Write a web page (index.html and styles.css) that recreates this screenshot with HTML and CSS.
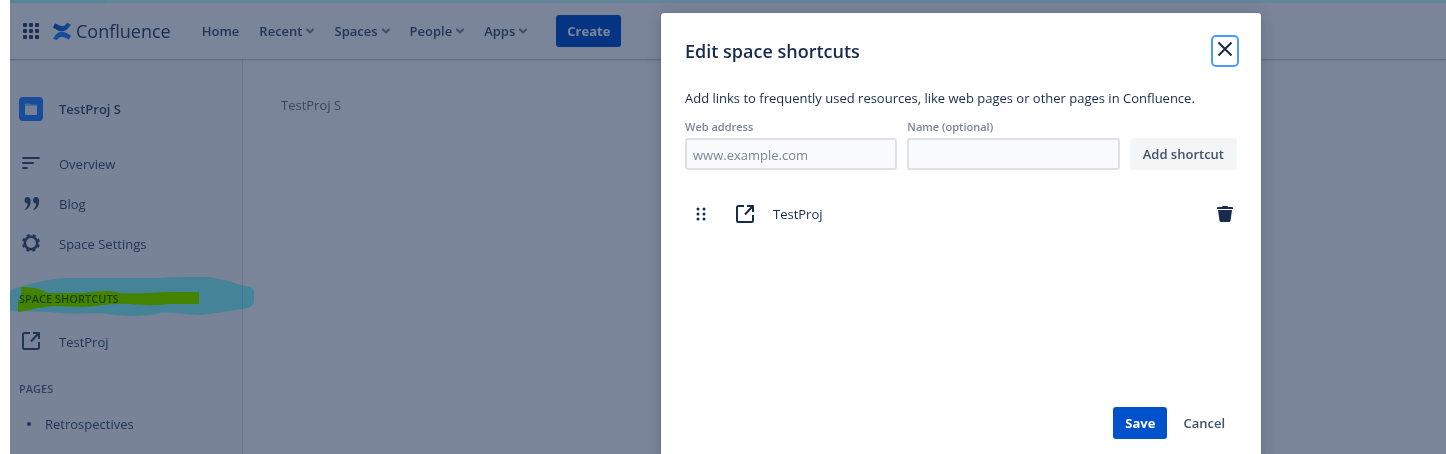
FILE: index.html
```html
<!DOCTYPE html>
<html lang="en">
<head>
<meta charset="utf-8">
<title>TestProj S - Confluence</title>
<link rel="stylesheet" href="styles.css">
</head>
<body>
<svg class="defs" aria-hidden="true">
  <symbol id="shortcut" viewBox="0 0 18 18"><path d="M8 1H2.500Q1 1 1 2.500V15.500Q1 17 2.500 17H15.500Q17 17 17 15.500V10" fill="none" stroke="currentColor" stroke-width="2"/><path d="M9 9.500L16 2" fill="none" stroke="currentColor" stroke-width="2"/><path d="M11 0H17Q18 0 18 1V7H16V3.500L14.500 2H11Z" fill="currentColor"/></symbol>
  <symbol id="chevron" viewBox="0 0 8 6"><path d="M1 1.500L4 4.500L7 1.500" fill="none" stroke="currentColor" stroke-width="2" stroke-linecap="round" stroke-linejoin="round"/></symbol>
</svg>
<div class="app">
  <header class="topbar">
    <button class="plain switcher" aria-label="Switch to"><svg width="16" height="16" viewBox="0 0 16 16" fill="currentColor"><rect width="4" height="4" rx="1"/><rect x="6" width="4" height="4" rx="1"/><rect x="12" width="4" height="4" rx="1"/><rect y="6" width="4" height="4" rx="1"/><rect x="6" y="6" width="4" height="4" rx="1"/><rect x="12" y="6" width="4" height="4" rx="1"/><rect y="12" width="4" height="4" rx="1"/><rect x="6" y="12" width="4" height="4" rx="1"/><rect x="12" y="12" width="4" height="4" rx="1"/></svg></button>
    <a class="brand" href="#">
      <svg width="18" height="17" viewBox="0 0 18 17"><defs><linearGradient id="g" x1="0" x2="1"><stop stop-color="#0052cc"/><stop offset="1" stop-color="#2684ff"/></linearGradient></defs><path d="M3 .7Q2.200.2 1.700 1L.2 4Q0 4.600.6 4.900C4 6.900 6.300 8.300 9.300 8.300C13 8.300 15.200 5.700 17.600 2Q17.900 1.400 17.300 1L14.500.1Q13.900 0 13.500.5C11.800 2.700 10.500 3.400 8.700 3.100C7 2.800 5 1.900 3 .7Z" fill="url(#g)"/><path d="M15 16.300Q15.800 16.800 16.300 16L17.800 13Q18 12.400 17.400 12.100C14 10.100 11.700 8.700 8.700 8.700C5 8.700 2.800 11.300.4 15Q.1 15.600.7 16L3.500 16.900Q4.100 17 4.500 16.500C6.200 14.300 7.500 13.600 9.300 13.900C11 14.200 13 15.100 15 16.300Z" fill="#2684ff"/></svg>
      <span>Confluence</span>
    </a>
    <nav class="menu">
      <a href="#">Home</a>
      <button class="plain">Recent<svg class="chev"><use href="#chevron"/></svg></button>
      <button class="plain">Spaces<svg class="chev"><use href="#chevron"/></svg></button>
      <button class="plain">People<svg class="chev"><use href="#chevron"/></svg></button>
      <button class="plain">Apps<svg class="chev"><use href="#chevron"/></svg></button>
    </nav>
    <button class="btn primary">Create</button>
  </header>
  <div class="body">
    <aside class="sidebar">
      <a class="item space" href="#"><svg width="24" height="24" viewBox="0 0 24 24"><rect width="24" height="24" rx="4" fill="#2684ff"/><path d="M6 7.500Q6 6.500 7 6.500H10.500L11.500 7.500H17Q18 7.500 18 8.500V10H6Z" fill="#9cc3ff"/><path d="M6 9H18V17Q18 18 17 18H7Q6 18 6 17Z" fill="#f4f5f7"/></svg><span>TestProj S</span></a>
      <a class="item" href="#"><svg width="24" height="24" viewBox="0 0 24 24" stroke="currentColor" stroke-width="2" stroke-linecap="round"><path d="M4 6H20M4 11H14M4 16H8"/></svg><span>Overview</span></a>
      <a class="item" href="#"><svg width="24" height="24" viewBox="0 0 24 24" fill="currentColor"><path id="q" d="M8.500 5C10.700 5 11.700 6.700 11.700 9.200C11.700 13.500 9.500 16.500 6.500 18Q5.700 18 5.900 17.200C7.700 15.600 8.500 14 8.500 11.500C6.500 11.500 5.500 10 5.500 8.200C5.500 6.200 6.800 5 8.500 5Z"/><use href="#q" x="8.500"/></svg><span>Blog</span></a>
      <a class="item" href="#"><svg width="24" height="24" viewBox="0 0 24 24" fill="none" stroke="currentColor"><circle cx="12" cy="11" r="6.200" stroke-width="2.600"/><circle cx="12" cy="11" r="7.900" stroke-width="2.200" stroke-dasharray="3.100 3.105" stroke-dashoffset="4.600"/></svg><span>Space Settings</span></a>
      <h2 class="heading marked">Space shortcuts
        <svg class="marker" width="244" height="39" viewBox="0 0 244 39" aria-hidden="true"><path fill="#90ffff" d="M0 14C8 9 20 7 30 5C43 1 55 1 70 1H150C160 0 170 0 200 0C215 2 225 7 235 9Q244 9 244 15V25Q243 31 232 32C215 34 205 37 190 38C175 38 165 35 150 36C135 40 115 39 105 38C90 34 70 38 50 36C35 34 20 35 0 34Z"/><path fill="#90ff00" d="M11 10C23 10 31 12 38 16H75C85 14 100 13 110 16C125 17 140 16 155 15H189V27H160C145 29 130 28 120 27C100 26 85 30 70 30C55 30 45 28 35 30C24 31 18 34 8 35V23H11Z"/></svg>
      </h2>
      <a class="item" href="#"><svg width="24" height="24" viewBox="-3 -2 24 24"><use href="#shortcut" width="18" height="18"/></svg><span>TestProj</span></a>
      <h2 class="heading pages">Pages</h2>
      <ul class="tree"><li><a href="#">Retrospectives</a></li></ul>
    </aside>
    <main class="content">TestProj S</main>
  </div>
  <div class="blanket">
    <section class="modal" role="dialog" aria-modal="true" aria-labelledby="title">
      <header class="modal-head"><h1 id="title">Edit space shortcuts</h1>
        <button class="plain close" aria-label="Close"><svg width="14" height="14" viewBox="0 0 14 14" stroke="currentColor" stroke-width="2"><path d="M.5.5L13.500 13.500M13.500.5L.5 13.500"/></svg></button></header>
      <p class="intro">Add links to frequently used resources, like web pages or other pages in Confluence.</p>
      <form class="fields">
        <div class="field"><label for="url">Web address</label><input id="url" type="text" placeholder="www.example.com"></div>
        <div class="field"><label for="name">Name (optional)</label><input id="name" type="text"></div>
        <button class="btn subtle" type="button">Add shortcut</button>
      </form>
      <div class="row">
        <svg width="10" height="14" viewBox="0 0 10 14" fill="currentColor"><circle cx="2" cy="2" r="1.500"/><circle cx="8" cy="2" r="1.500"/><circle cx="2" cy="7" r="1.500"/><circle cx="8" cy="7" r="1.500"/><circle cx="2" cy="12" r="1.500"/><circle cx="8" cy="12" r="1.500"/></svg>
        <svg width="18" height="18"><use href="#shortcut"/></svg>
        <span class="row-name">TestProj</span>
        <button class="plain trash" aria-label="Delete"><svg width="16" height="16" viewBox="0 0 16 16" fill="currentColor"><path d="M0 2Q0 1 1 1H5Q5 0 6 0H10Q11 0 11 1H15Q16 1 16 2V3H0ZM1 4H15L13.500 14.700Q13.300 16 12 16H4Q2.700 16 2.500 14.700Z"/></svg></button>
      </div>
      <footer class="actions"><button class="btn primary">Save</button><button class="btn link">Cancel</button></footer>
    </section>
  </div>
  <div class="strip"></div>
</div>
</body>
</html>
```
FILE: styles.css
```css
* { box-sizing: border-box; }
body {
  margin: 0;
  padding-left: 10px;
  background: #fff;
  color: #172b4d;
  font: 13px/20px "Open Sans", "Noto Sans", sans-serif;
  overflow: hidden;
}
a { color: inherit; text-decoration: none; }
svg { display: block; flex: none; }
h1, h2, p, ul { margin: 0; padding: 0; }
.defs { position: absolute; width: 0; height: 0; }
.plain { display: flex; align-items: center; padding: 0; border: 0; background: none; color: inherit; font: inherit; }
.app { position: relative; display: flex; flex-direction: column; height: 100vh; overflow: hidden; }

.topbar {
  display: flex;
  align-items: center;
  height: 59px;
  padding: 3px 13px 0;
  box-shadow: 0 1px 2px rgba(9, 30, 66, .3);
  color: #344563;
  z-index: 1;
}
.brand { display: flex; align-items: center; gap: 5px; margin: 0 31px 0 14px; font-size: 18px; }
.menu { display: flex; gap: 20px; font-weight: 600; color: #42526e; }
.chev { width: 8px; height: 6px; margin-left: 4px; color: #7a869a; }
.btn {
  height: 32px;
  padding: 0 12px;
  border: 0;
  border-radius: 3px;
  font: 600 13px/20px "Open Sans", "Noto Sans", sans-serif;
}
.primary { background: #0052cc; color: #fff; font-weight: 700; }
.topbar .primary { margin-left: 29px; padding: 0 11px; }

.body { display: flex; flex: 1; min-height: 0; }
.sidebar { width: 233px; padding: 30px 8px 0 9px; border-right: 1px solid #dfe1e6; background: #fafbfc; color: #42526e; }
.item { display: flex; align-items: center; gap: 16px; height: 40px; }
.space { margin-bottom: 15px; font-weight: 600; }
.heading { height: 20px; margin: 25px 0 13px; font-size: 11px; font-weight: 600; text-transform: uppercase; color: #5e6c84; }
.marked { position: relative; }
.marker { position: absolute; left: -9px; top: -12px; z-index: 3; mix-blend-mode: multiply; }
.pages { margin: 17px 0 15px; }
.tree { list-style: none; }
.tree li { display: flex; align-items: center; gap: 14px; padding-left: 8px; }
.tree li::before { content: ""; width: 4px; height: 4px; border-radius: 50%; background: currentColor; }
.content { flex: 1; padding: 36px 38px; color: #6b778c; }

.blanket {
  position: absolute;
  inset: 0;
  z-index: 2;
  display: grid;
  grid-template-columns: 651fr 600px 185fr;
  align-items: start;
  padding-top: 13px;
  background: rgba(9, 30, 66, .54);
}
.modal { grid-column: 2; padding: 22px 24px 24px; border-radius: 3px; background: #fff; box-shadow: 0 0 1px rgba(9, 30, 66, .3), 0 2px 16px rgba(9, 30, 66, .2); }
.modal-head { display: flex; justify-content: space-between; align-items: center; height: 32px; }
h1 { font-size: 18px; line-height: 28px; font-weight: 600; }
.close { justify-content: center; width: 28px; height: 32px; padding-bottom: 4px; border: 2px solid #4c9aff; border-radius: 5px; margin-right: -2px; }
.intro { margin-top: 21px; }
.fields { display: grid; grid-template-columns: 1fr 1fr auto; align-items: end; gap: 10px; margin-top: 11px; }
.field label { display: block; height: 19px; font-size: 11px; line-height: 16px; font-weight: 600; color: #7a869a; }
.field input { display: block; width: 100%; height: 32px; padding: 2px 6px 0; border: 2px solid #dfe1e6; border-radius: 3px; background: #fafbfc; font: inherit; color: #172b4d; }
.field input::placeholder { color: #7a869a; opacity: 1; }
.subtle { padding: 0 13px; background: #f4f5f7; color: #42526e; }
.row { display: flex; align-items: center; height: 40px; margin-top: 24px; padding: 0 4px 0 11px; }
.row > svg + svg { margin-left: 30px; }
.row-name { flex: 1; margin-left: 19px; }
.actions { display: flex; justify-content: flex-end; gap: 4px; margin-top: 173px; }
.link { background: none; color: #42526e; }

.strip { position: absolute; inset: 0 0 auto; z-index: 4; height: 3px; background: linear-gradient(90deg, #b0ffff 96px, #cfffff 96px); mix-blend-mode: multiply; }
```
